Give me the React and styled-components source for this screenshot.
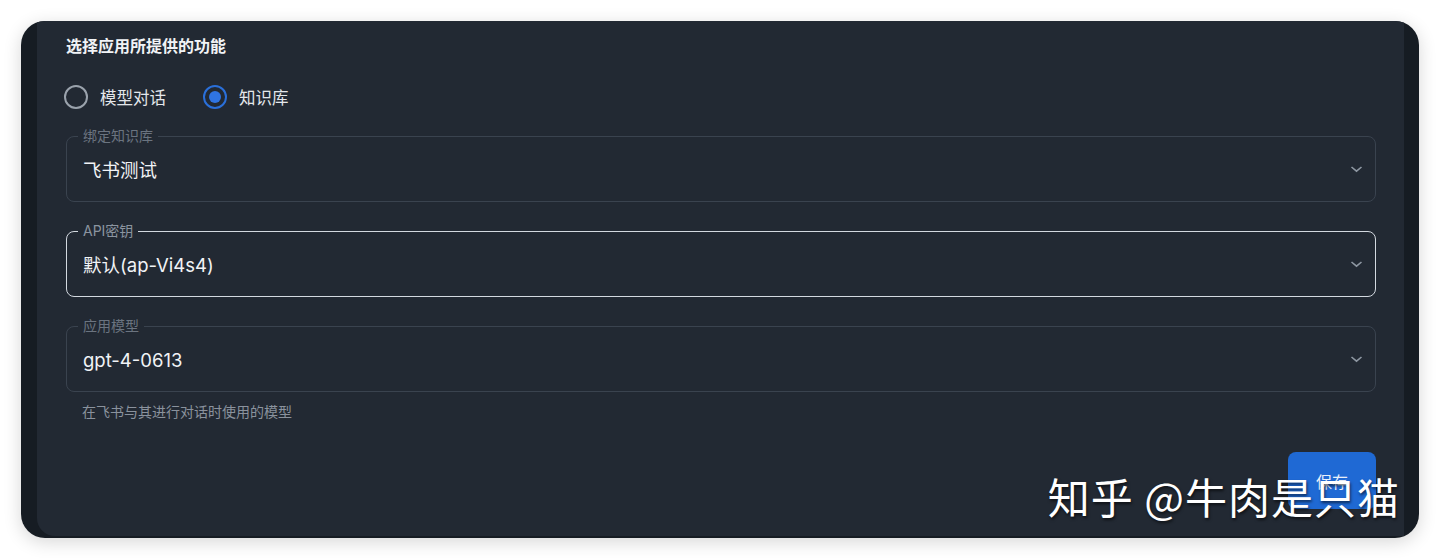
import React, { useState } from 'react';
import styled, { createGlobalStyle } from 'styled-components';

const Global = createGlobalStyle`
  html, body {
    margin: 0;
    background: #ffffff;
  }
  body {
    font-family: "Inter", "Noto Sans CJK SC", sans-serif;
  }
`;

const Page = styled.div`
  padding: 21px 21px 0 21px;
  height: 558px;
  box-sizing: border-box;
`;

const Card = styled.div`
  position: relative;
  background: #161c23;
  border-radius: 24px;
  padding: 0 15px 2px 16px;
  box-shadow: 0 4px 18px rgba(0, 0, 0, 0.16);
  overflow: hidden;
`;

const Panel = styled.div`
  background: #222933;
  border-bottom-left-radius: 18px;
  padding: 14px 28px 27px 29px;
  display: flex;
  flex-direction: column;
`;

const Title = styled.div`
  color: #f1f3f6;
  font-size: 16px;
  font-weight: 700;
  line-height: 22px;
`;

const RadioRow = styled.div`
  display: flex;
  align-items: center;
  gap: 37px;
  height: 42px;
  margin-top: 19px;
  margin-left: -2px;
`;

const RadioItem = styled.label`
  display: flex;
  align-items: center;
  gap: 12px;
  color: #e4e7eb;
  font-size: 16.5px;
  cursor: pointer;
`;

const Ring = styled.span`
  width: 24px;
  height: 24px;
  box-sizing: border-box;
  border-radius: 50%;
  border: 2px solid ${p => (p.$on ? '#2a6fd9' : '#9aa2ac')};
  display: flex;
  align-items: center;
  justify-content: center;
  &::after {
    content: '';
    width: 12px;
    height: 12px;
    border-radius: 50%;
    background: #2f74e2;
    display: ${p => (p.$on ? 'block' : 'none')};
  }
`;

const Field = styled.div`
  position: relative;
  height: 66px;
  box-sizing: border-box;
  border: ${p => (p.$active ? '1.5px solid #d3d9e0' : '1px solid #3a434f')};
  border-radius: 8px;
  margin-top: ${p => p.$gap}px;
  display: flex;
  align-items: center;
  padding: 0 12px 0 16px;
`;

const Legend = styled.span`
  position: absolute;
  top: -10px;
  left: 11px;
  padding: 0 5px;
  background: #222933;
  color: ${p => (p.$active ? '#8b94a0' : '#6b7480')};
  font-size: 14px;
  line-height: 17px;
`;

const Value = styled.div`
  flex: 1;
  color: #f1f3f6;
  font-size: 18.5px;
  line-height: 24px;
  margin-top: 1px;
`;

const Chevron = styled.svg`
  width: 13px;
  height: 8px;
  flex: none;
`;

const Helper = styled.div`
  margin-top: 12px;
  padding-left: 16px;
  color: #8a929d;
  font-size: 14px;
  line-height: 16px;
`;

const Actions = styled.div`
  display: flex;
  justify-content: flex-end;
  margin-top: 32px;
`;

const SaveButton = styled.button`
  width: 88px;
  height: 57px;
  border: none;
  border-radius: 8px;
  background: #1f69d4;
  color: #e8effa;
  font-family: inherit;
  font-size: 16px;
  cursor: pointer;
`;

const Watermark = styled.div`
  position: absolute;
  right: 19px;
  bottom: 17px;
  color: #ffffff;
  font-family: "Noto Sans CJK SC", sans-serif;
  font-size: 42px;
  line-height: 50px;
  letter-spacing: 1px;
  text-shadow: 1px 2px 3px rgba(0, 0, 0, 0.6);
  pointer-events: none;
`;

const Arrow = () => (
  <Chevron viewBox="0 0 13 8">
    <polyline points="1.5,2 6.5,6.2 11.5,2" fill="none" stroke="#8e97a2" strokeWidth="1.6" />
  </Chevron>
);

const SelectField = ({ label, value, active, gap }) => (
  <Field $active={active} $gap={gap}>
    <Legend $active={active}>{label}</Legend>
    <Value>{value}</Value>
    <Arrow />
  </Field>
);

export default function App() {
  const [mode, setMode] = useState('kb');

  return (
    <Page>
      <Global />
      <Card>
        <Panel>
          <Title>选择应用所提供的功能</Title>

          <RadioRow>
            <RadioItem onClick={() => setMode('chat')}>
              <Ring $on={mode === 'chat'} />
              模型对话
            </RadioItem>
            <RadioItem onClick={() => setMode('kb')}>
              <Ring $on={mode === 'kb'} />
              知识库
            </RadioItem>
          </RadioRow>

          <SelectField label="绑定知识库" value="飞书测试" gap={18} />
          <SelectField label="API密钥" value="默认(ap-Vi4s4)" active gap={29} />
          <SelectField label="应用模型" value="gpt-4-0613" gap={29} />
          <Helper>在飞书与其进行对话时使用的模型</Helper>

          <Actions>
            <SaveButton>保存</SaveButton>
          </Actions>
        </Panel>
        <Watermark>知乎 @牛肉是只猫</Watermark>
      </Card>
    </Page>
  );
}
